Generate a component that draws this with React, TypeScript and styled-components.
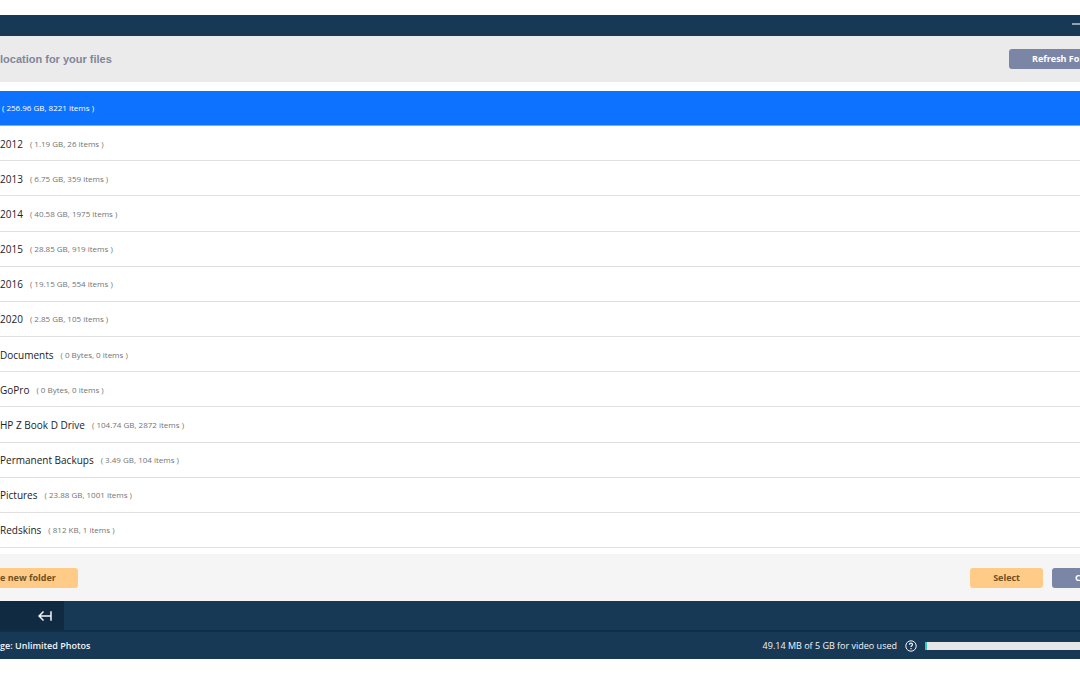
import React from "react";
import styled, { createGlobalStyle } from "styled-components";

const GlobalStyle = createGlobalStyle`
  *, *::before, *::after { box-sizing: border-box; }
  html, body { margin: 0; background: #fff; }
  body {
    font-family: "Open Sans", "Noto Sans", sans-serif;
    font-size: 10px;
    line-height: 16px;
    color: #222;
    overflow-x: hidden;
  }
  button { font: inherit; border: 0; cursor: pointer; }
`;

const Window = styled.div`
  display: flex;
  flex-direction: column;
  padding: 15px 0 16px;
  overflow: hidden;
`;

const TitleBar = styled.div`
  display: flex;
  justify-content: flex-end;
  height: 21px;
  background: #183955;
`;

const MinimizeButton = styled.button`
  display: flex;
  width: 9px;
  padding: 8px 0 0;
  background: none;
  color: #e4eaf0;
`;

const Header = styled.header`
  display: flex;
  align-items: center;
  justify-content: space-between;
  height: 46px;
  background: #ebebeb;
`;

const Title = styled.h1`
  margin: 0;
  font: bold 11px/16px "Liberation Sans", Arial, sans-serif;
  color: #81869a;
`;

const Button = styled.button<{ $tone: "slate" | "amber"; $edge?: "left" | "right" }>`
  display: flex;
  align-items: center;
  height: 20px;
  padding: ${(p) => (p.$edge === "left" ? "0 22px 0 0" : p.$edge === "right" ? "0 0 0 23px" : "0 23px")};
  border-radius: ${(p) => (p.$edge === "left" ? "0 3px 3px 0" : p.$edge === "right" ? "3px 0 0 3px" : "3px")};
  background: ${(p) => (p.$tone === "amber" ? "#ffcb86" : "#7b85a6")};
  color: ${(p) => (p.$tone === "amber" ? "#6f5124" : "#fff")};
  font-size: 9px;
  font-weight: 700;
  white-space: nowrap;
  overflow: hidden;
`;

const RefreshButton = styled(Button)`
  width: 71px;
`;

const CancelButton = styled(Button)`
  width: 28px;
`;

const FolderRow = styled.li`
  display: flex;
  align-items: center;
  gap: 7px;
  padding-top: 1px;
  border-bottom: 1px solid #dfdfdf;
`;

const SelectedRow = styled.div`
  display: flex;
  align-items: center;
  height: 35px;
  margin-top: 9px;
  padding-left: 2px;
  border-bottom: 1px solid #77adff;
  background: #0d72ff;
`;

const FolderList = styled.ul`
  display: grid;
  grid-auto-rows: 1fr;
  height: 422px;
  margin: 0;
  padding: 0;
  list-style: none;
`;

const Details = styled.span<{ $selected?: boolean }>`
  font-size: 8px;
  color: ${(p) => (p.$selected ? "#fff" : "#747474")};
`;

const Actions = styled.div`
  display: flex;
  align-items: center;
  justify-content: space-between;
  height: 47px;
  margin-top: 6px;
  background: #f5f5f5;
`;

const ActionGroup = styled.div`
  display: flex;
  gap: 9px;
`;

const Toolbar = styled.div`
  display: flex;
  height: 31px;
  border-bottom: 2px solid #102e48;
  background: #183955;
`;

const CollapseButton = styled.button`
  display: flex;
  align-items: center;
  justify-content: flex-end;
  width: 64px;
  padding: 0 12px 0 0;
  background: #102a42;
  color: #f2f5f8;
`;

const StatusBar = styled.footer`
  display: flex;
  align-items: center;
  justify-content: space-between;
  height: 27px;
  background: #183955;
  color: #f2f5f8;
  font-size: 9px;
`;

const Plan = styled.span`
  font-weight: 600;
`;

const Usage = styled.div`
  display: flex;
  align-items: center;
`;

const HelpButton = styled.button`
  display: flex;
  margin: 0 8px;
  padding: 0;
  background: none;
  color: inherit;
`;

const Meter = styled.div`
  width: 155px;
  height: 8px;
  background: #e6e6e6;
`;

const MeterFill = styled.div`
  width: 2px;
  height: 100%;
  background: #36c9b4;
`;

const folders = [
  { name: "2012", details: "( 1.19 GB, 26 items )" },
  { name: "2013", details: "( 6.75 GB, 359 items )" },
  { name: "2014", details: "( 40.58 GB, 1975 items )" },
  { name: "2015", details: "( 28.85 GB, 919 items )" },
  { name: "2016", details: "( 19.15 GB, 554 items )" },
  { name: "2020", details: "( 2.85 GB, 105 items )" },
  { name: "Documents", details: "( 0 Bytes, 0 items )" },
  { name: "GoPro", details: "( 0 Bytes, 0 items )" },
  { name: "HP Z Book D Drive", details: "( 104.74 GB, 2872 items )" },
  { name: "Permanent Backups", details: "( 3.49 GB, 104 items )" },
  { name: "Pictures", details: "( 23.88 GB, 1001 items )" },
  { name: "Redskins", details: "( 812 KB, 1 items )" },
];

export default function App() {
  return (
    <>
      <GlobalStyle />
      <Window>
        <TitleBar>
          <MinimizeButton aria-label="Minimize">
            <svg width="9" height="2" viewBox="0 0 9 2">
              <path d="M1 1h8" stroke="currentColor" strokeWidth="1.2" />
            </svg>
          </MinimizeButton>
        </TitleBar>
        <Header>
          <Title>location for your files</Title>
          <RefreshButton $tone="slate" $edge="right">Refresh Fol</RefreshButton>
        </Header>
        <main>
          <SelectedRow>
            <Details $selected>( 256.96 GB, 8221 items )</Details>
          </SelectedRow>
          <FolderList>
            {folders.map((f) => (
              <FolderRow key={f.name}>
                <span>{f.name}</span>
                <Details>{f.details}</Details>
              </FolderRow>
            ))}
          </FolderList>
        </main>
        <Actions>
          <Button $tone="amber" $edge="left">e new folder</Button>
          <ActionGroup>
            <Button $tone="amber">Select</Button>
            <CancelButton $tone="slate" $edge="right">C</CancelButton>
          </ActionGroup>
        </Actions>
        <Toolbar>
          <CollapseButton aria-label="Collapse sidebar">
            <svg width="14" height="12" viewBox="0 0 14 12" fill="none" stroke="currentColor" strokeWidth="1.5">
              <path d="M5.5 1.5 1 6l4.5 4.5M1 6h11.5M13 1.3v9.4" />
            </svg>
          </CollapseButton>
        </Toolbar>
        <StatusBar>
          <Plan>ge: Unlimited Photos</Plan>
          <Usage>
            <span>49.14 MB of 5 GB for video used</span>
            <HelpButton aria-label="Help">
              <svg width="12" height="12" viewBox="0 0 12 12" fill="none" stroke="currentColor">
                <circle cx="6" cy="6" r="5.2" strokeWidth="1" />
                <path d="M4.5 4.7C4.5 2.6 7.5 2.7 7.5 4.6C7.5 5.7 6 5.7 6 7M6 8v1.2" strokeWidth="1.2" />
              </svg>
            </HelpButton>
            <Meter role="meter" aria-label="Video storage used" aria-valuemin={0} aria-valuemax={5120} aria-valuenow={49}>
              <MeterFill />
            </Meter>
          </Usage>
        </StatusBar>
      </Window>
    </>
  );
}
